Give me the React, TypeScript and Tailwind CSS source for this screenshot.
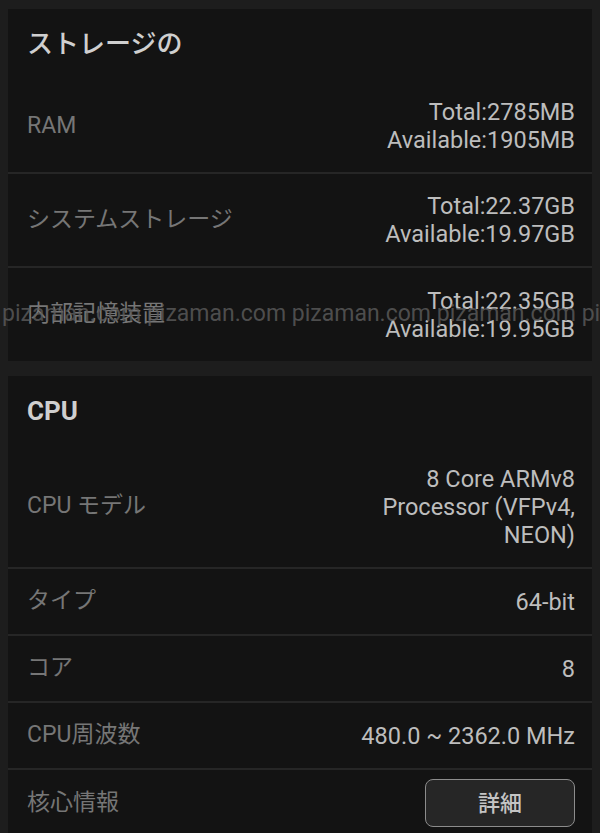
import React from 'react';

const JP = "font-['Roboto','Noto_Sans_CJK_JP',sans-serif]";

interface RowProps {
  label: string;
  values: string[];
  height: string;
}

const Row: React.FC<RowProps> = ({ label, values, height }) => (
  <div className={`flex items-center justify-between pl-[19px] pr-[17px] ${height}`}>
    <span className="text-[23px] text-[#767676]">{label}</span>
    <div className="flex flex-col items-end text-right text-[23.5px] leading-[28px] text-[#bdbdbd]">
      {values.map((v) => (
        <span key={v}>{v}</span>
      ))}
    </div>
  </div>
);

const Divider = () => <div className="h-[2px] bg-[#262626]" />;

export default function App() {
  return (
    <div className={`relative h-[833px] overflow-hidden bg-[#1d1d1d] px-2 pt-[9px] ${JP}`}>
      {/* storage card */}
      <div className="bg-[#131313]">
        <div className="flex h-[71px] items-center pl-[19px] text-[26px] font-medium text-[#cfcfcf]">
          ストレージの
        </div>
        <Row label="RAM" values={['Total:2785MB', 'Available:1905MB']} height="h-[92px]" />
        <Divider />
        <Row label="システムストレージ" values={['Total:22.37GB', 'Available:19.97GB']} height="h-[92px]" />
        <Divider />
        <Row label="内部記憶装置" values={['Total:22.35GB', 'Available:19.95GB']} height="h-[93px]" />
      </div>

      {/* cpu card */}
      <div className="mt-[15px] bg-[#131313]">
        <div className="flex h-[70px] items-center pl-[19px] text-[26px] font-bold text-[#cfcfcf]">
          CPU
        </div>
        <Row
          label="CPU モデル"
          values={['8 Core ARMv8', 'Processor (VFPv4,', 'NEON)']}
          height="h-[121px]"
        />
        <Divider />
        <Row label="タイプ" values={['64-bit']} height="h-[65px]" />
        <Divider />
        <Row label="コア" values={['8']} height="h-[65px]" />
        <Divider />
        <Row label="CPU周波数" values={['480.0 ~ 2362.0 MHz']} height="h-[65px]" />
        <Divider />
        <div className="flex h-[66px] items-center justify-between pl-[19px] pr-[17px]">
          <span className="text-[23px] text-[#767676]">核心情報</span>
          <button className="flex h-[48px] w-[150px] items-center justify-center rounded-lg border-[1.5px] border-[#8c8c8c] bg-[#262626] text-[22px] font-medium text-[#c4c4c4]">
            詳細
          </button>
        </div>
      </div>

      {/* watermark */}
      <div className="pointer-events-none absolute left-[2px] top-[300px] whitespace-nowrap font-['Roboto',sans-serif] text-[23px] leading-[28px] text-[#5e5e5e]/80">
        pizaman.com pizaman.com pizaman.com pizaman.com pizaman.com
      </div>
    </div>
  );
}
